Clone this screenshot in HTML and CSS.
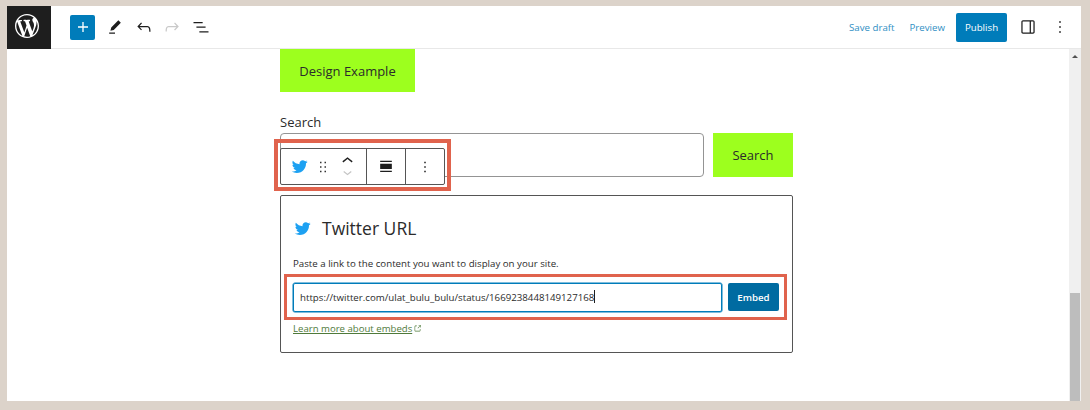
FILE: index.html
```html
<!DOCTYPE html>
<html lang="en">
<head>
    <meta charset="UTF-8">
    <title>Edit Post</title>
    <link rel="stylesheet" href="styles.css">
</head>
<body>
    <div class="editor">
        <header class="topbar">
            <a class="wp-logo">
                <svg viewBox="0 0 20 20" width="24" height="24"><path fill="#fff" d="M20 10c0-5.51-4.49-10-10-10C4.48 0 0 4.49 0 10c0 5.52 4.48 10 10 10 5.51 0 10-4.48 10-10zM7.78 15.37L4.37 6.22c.55-.02 1.17-.08 1.17-.08.5-.06.44-1.13-.06-1.11 0 0-1.45.11-2.37.11-.18 0-.37 0-.58-.01C4.12 2.69 6.87 1.11 10 1.11c2.33 0 4.45.87 6.05 2.34-.68-.11-1.65.39-1.65 1.58 0 .74.45 1.36.9 2.1.35.61.55 1.36.55 2.46 0 1.49-1.4 5-1.4 5l-3.03-8.37c.54-.02.82-.17.82-.17.5-.05.44-1.25-.06-1.22 0 0-1.44.12-2.38.12-.87 0-2.33-.12-2.33-.12-.5-.03-.56 1.2-.06 1.22l.92.08 1.26 3.41zM17.41 10c.24-.64.74-1.87.43-4.25.7 1.29 1.05 2.71 1.05 4.25 0 3.29-1.73 6.24-4.4 7.78.97-2.59 1.94-5.2 2.92-7.78zM6.1 18.09C3.12 16.65 1.11 13.53 1.11 10c0-1.3.23-2.48.72-3.59C3.25 10.3 4.67 14.2 6.1 18.09zm4.03-6.63l2.58 6.98c-.86.29-1.76.45-2.71.45-.79 0-1.57-.11-2.29-.33.81-2.38 1.62-4.74 2.42-7.1z"/></svg>
            </a>
            <div class="tools">
                <button class="add-btn">
                    <svg viewBox="0 0 24 24" width="20" height="20"><path fill="#fff" d="M18 11.2h-5.2V6h-1.6v5.2H6v1.6h5.2V18h1.6v-5.2H18z"/></svg>
                </button>
                <svg class="tool" viewBox="0 0 24 24" width="20" height="20"><path d="m19 7-3-3-8.5 8.5-1 4 4-1L19 7Zm-7 11.5H5V20h7v-1.5Z"/></svg>
                <svg class="tool" viewBox="0 0 24 24" width="20" height="20"><path d="M18.3 11.7c-.6-.6-1.4-.9-2.3-.9H6.7l2.9-3.3-1.1-1-4.5 5L8.5 16l1-1-2.7-2.7H16c.5 0 .9.2 1.3.5 1 1 1 3.4 1 4.5v.3h1.5v-.2c0-1.5 0-4.3-1.5-5.7z"/></svg>
                <svg class="tool off" viewBox="0 0 24 24" width="20" height="20"><path d="M15.6 6.5l-1.1 1 2.9 3.3H8c-.9 0-1.7.3-2.3.9-1.4 1.5-1.4 4.2-1.4 5.6v.2h1.5v-.3c0-1.1 0-3.5 1-4.5.3-.3.7-.5 1.3-.5h9.2L14.5 15l1.1 1.1 4.6-4.6-4.6-5z"/></svg>
                <svg class="tool" viewBox="0 0 24 24" width="20" height="20"><path d="M3 6h11v1.5H3V6Zm3.5 5.5h11V13h-11v-1.5ZM21 17H10v1.5h11V17Z"/></svg>
            </div>
            <div class="actions">
                <a class="link">Save draft</a>
                <a class="link">Preview</a>
                <button class="publish">Publish</button>
                <svg class="side" viewBox="0 0 24 24" width="20" height="20"><path d="M18 4H6c-1.1 0-2 .9-2 2v12c0 1.1.9 2 2 2h12c1.1 0 2-.9 2-2V6c0-1.1-.9-2-2-2zm-4 14.5H6c-.3 0-.5-.2-.5-.5V6c0-.3.2-.5.5-.5h8v13zm4.5-.5c0 .3-.2.5-.5.5h-2.5v-13H18c.3 0 .5.2.5.5v12z"/></svg>
                <svg class="more" viewBox="0 0 24 24" width="20" height="20"><path d="M13 19h-2v-2h2v2zm0-6h-2v-2h2v2zm0-6h-2V5h2v2z"/></svg>
            </div>
        </header>

        <div class="main">
            <div class="canvas">
                <div class="column">
                    <div class="design-btn">Design Example</div>

                    <div class="search-block">
                        <label class="search-label">Search</label>
                        <div class="search-row">
                            <div class="search-input"></div>
                            <div class="search-btn">Search</div>
                        </div>

                        <div class="block-toolbar">
                            <div class="tb-group tb-first">
                                <svg viewBox="0 0 24 24" width="19" height="19"><path fill="#1da1f2" d="M22.23 5.924c-.736.326-1.527.547-2.357.646.847-.508 1.498-1.312 1.804-2.27-.793.47-1.67.812-2.606.996C18.325 4.498 17.258 4 16.078 4c-2.266 0-4.103 1.837-4.103 4.103 0 .322.036.635.106.935-3.41-.17-6.433-1.804-8.457-4.287-.353.607-.556 1.312-.556 2.064 0 1.424.724 2.68 1.825 3.415-.673-.022-1.305-.207-1.86-.514v.052c0 1.988 1.415 3.647 3.293 4.023-.344.095-.707.145-1.08.145-.265 0-.522-.026-.773-.074.522 1.63 2.038 2.817 3.833 2.85-1.404 1.1-3.174 1.757-5.096 1.757-.332 0-.66-.02-.98-.057 1.816 1.164 3.973 1.843 6.29 1.843 7.547 0 11.675-6.252 11.675-11.675 0-.178-.004-.355-.012-.53.802-.578 1.497-1.3 2.047-2.132z"/></svg>
                                <svg class="grip" viewBox="0 0 24 24" width="18" height="18"><path fill="#333" d="M8 7h2V5H8v2zm0 6h2v-2H8v2zm0 6h2v-2H8v2zm6-14v2h2V5h-2zm0 8h2v-2h-2v2zm0 6h2v-2h-2v2z"/></svg>
                                <div class="movers">
                                    <svg viewBox="5 7 14 8" width="13" height="8"><path fill="#1e1e1e" d="M6.5 12.4L12 8l5.5 4.4-.9 1.2L12 10l-4.5 3.6-1-1.2z"/></svg>
                                    <svg viewBox="5 9 14 8" width="11" height="6"><path fill="#c4c4c4" d="M17.5 11.6L12 16l-5.5-4.4.9-1.2L12 14l4.5-3.6 1 1.2z"/></svg>
                                </div>
                            </div>
                            <div class="tb-group tb-align">
                                <svg viewBox="0 0 24 24" width="20" height="20"><path fill="#1e1e1e" d="M5 4.5h14V6H5zM5 8h14v6.5H5zM5 16.5h14V18H5z"/></svg>
                            </div>
                            <div class="tb-group tb-more">
                                <svg viewBox="0 0 24 24" width="18" height="18"><path fill="#1e1e1e" d="M13 19h-2v-2h2v2zm0-6h-2v-2h2v2zm0-6h-2V5h2v2z"/></svg>
                            </div>
                        </div>
                        <div class="mark mark-toolbar"></div>
                    </div>

                    <div class="embed">
                        <div class="embed-title">
                            <svg viewBox="0 0 24 24" width="19" height="19"><path fill="#1da1f2" d="M22.23 5.924c-.736.326-1.527.547-2.357.646.847-.508 1.498-1.312 1.804-2.27-.793.47-1.67.812-2.606.996C18.325 4.498 17.258 4 16.078 4c-2.266 0-4.103 1.837-4.103 4.103 0 .322.036.635.106.935-3.41-.17-6.433-1.804-8.457-4.287-.353.607-.556 1.312-.556 2.064 0 1.424.724 2.68 1.825 3.415-.673-.022-1.305-.207-1.86-.514v.052c0 1.988 1.415 3.647 3.293 4.023-.344.095-.707.145-1.08.145-.265 0-.522-.026-.773-.074.522 1.63 2.038 2.817 3.833 2.85-1.404 1.1-3.174 1.757-5.096 1.757-.332 0-.66-.02-.98-.057 1.816 1.164 3.973 1.843 6.29 1.843 7.547 0 11.675-6.252 11.675-11.675 0-.178-.004-.355-.012-.53.802-.578 1.497-1.3 2.047-2.132z"/></svg>
                            <span>Twitter URL</span>
                        </div>
                        <p class="embed-help">Paste a link to the content you want to display on your site.</p>
                        <div class="embed-form">
                            <div class="embed-input">https://twitter.com/ulat_bulu_bulu/status/1669238448149127168<i class="caret"></i></div>
                            <button class="embed-btn">Embed</button>
                        </div>
                        <a class="embed-learn"><span>Learn more about embeds</span><svg viewBox="0 0 24 24" width="9" height="9"><path fill="#4f7a3a" d="M18.2 17c0 .7-.6 1.2-1.2 1.2H7c-.7 0-1.2-.6-1.2-1.2V7c0-.7.6-1.2 1.2-1.2h3.2V4.2H7C5.5 4.2 4.2 5.5 4.2 7v10c0 1.5 1.2 2.8 2.8 2.8h10c1.5 0 2.8-1.2 2.8-2.8v-3.6h-1.5V17zM14.9 3v1.5h3.7l-6.4 6.4 1.1 1.1 6.4-6.4v3.7h1.5V3h-6.8z"/></svg></a>
                    </div>
                </div>
            </div>
            <div class="scrollbar">
                <i class="scroll-up"></i>
                <div class="scroll-thumb"></div>
            </div>
        </div>
    </div>
</body>
</html>
```

FILE: styles.css
```css
html, body {
    margin: 0;
    height: 100%;
}
body {
    background-color: #dcd3ca;
    font-family: "Open Sans", Arial, sans-serif;
    color: #2b2b2b;
    padding: 6px 9px 9px 7px;
    box-sizing: border-box;
    overflow: hidden;
}
button {
    font-family: inherit;
    border: none;
    padding: 0;
}
.editor {
    height: 100%;
    background-color: #fff;
    display: flex;
    flex-direction: column;
}

/* top bar */
.topbar {
    height: 42px;
    flex-shrink: 0;
    display: flex;
    align-items: center;
    border-bottom: 1px solid #e8e8e8;
}
.wp-logo {
    width: 44px;
    height: 43px;
    margin-bottom: -1px;
    background-color: #1e1e1e;
    display: flex;
    align-items: center;
    justify-content: center;
}
.wp-logo svg {
    margin: 0 4px 3px 0;
}
.tools {
    display: flex;
    align-items: center;
    margin-left: 19px;
}
.add-btn {
    width: 25px;
    height: 25px;
    border-radius: 2px;
    background-color: #007cba;
    display: flex;
    align-items: center;
    justify-content: center;
    margin-right: 10px;
}
.tool {
    margin-right: 8.6px;
    fill: #1e1e1e;
}
.tool.off {
    fill: #c9c9c9;
}
.actions {
    margin-left: auto;
    display: flex;
    align-items: center;
    font-size: 9.7px;
    padding-right: 11px;
}
.link {
    color: #2f8fc4;
    margin-right: 15px;
}
.publish {
    width: 51px;
    height: 29px;
    border-radius: 2px;
    background-color: #007cba;
    color: #fff;
    font-size: 9.7px;
    margin-left: -4px;
}
.side {
    margin-left: 11px;
    fill: #1e1e1e;
}
.more {
    margin-left: 12px;
    fill: #1e1e1e;
}

/* canvas */
.main {
    flex: 1;
    min-height: 0;
    display: flex;
}
.canvas {
    flex: 1;
    min-width: 0;
}
.column {
    width: 513px;
    margin-left: 273px;
}
.design-btn {
    width: 135px;
    height: 43px;
    background-color: #9dff1e;
    font-size: 13px;
    display: flex;
    align-items: center;
    justify-content: center;
}
.search-block {
    position: relative;
    margin-top: 20px;
}
.search-label {
    display: block;
    font-size: 13px;
    line-height: 20px;
    margin-bottom: 1px;
}
.search-row {
    display: flex;
    gap: 9px;
}
.search-input {
    flex: 1;
    height: 42px;
    border: 1px solid #949494;
    border-radius: 4px;
}
.search-btn {
    width: 80px;
    height: 44px;
    background-color: #9dff1e;
    font-size: 13px;
    display: flex;
    align-items: center;
    justify-content: center;
}

/* block toolbar over the search field */
.block-toolbar {
    position: absolute;
    left: 0;
    top: 36px;
    height: 35px;
    display: flex;
    background-color: #fff;
    border: 1px solid #555;
    border-radius: 2px;
}
.tb-group {
    display: flex;
    align-items: center;
    justify-content: center;
    border-left: 1px solid #555;
}
.tb-first {
    width: 85px;
    border-left: none;
    padding-left: 9px;
    justify-content: flex-start;
    box-sizing: border-box;
}
.grip {
    margin-left: 5px;
}
.tb-align {
    width: 38px;
}
.tb-more {
    width: 38px;
}
.movers {
    display: flex;
    flex-direction: column;
    align-items: center;
    gap: 6px;
    margin-left: 9px;
    margin-top: -1px;
}
.movers svg {
    display: block;
}
.mark {
    border: 4px solid #e0634d;
}
.mark-toolbar {
    position: absolute;
    left: -6px;
    top: 27px;
    width: 169px;
    height: 44px;
}

/* embed placeholder */
.embed {
    margin-top: 18px;
    height: 156px;
    border: 1px solid #555;
    border-radius: 2px;
    padding: 0 12px;
}
.embed-title {
    display: flex;
    align-items: center;
    gap: 10px;
    margin-top: 19px;
    height: 26px;
    font-size: 17.5px;
}
.embed-help {
    margin: 15px 0 0;
    font-size: 9.7px;
    line-height: 16px;
}
.embed-form {
    display: flex;
    align-items: center;
    gap: 6px;
    margin: 2px -7px 0 -9px;
    height: 40px;
    padding: 0 5px 0 6px;
    border: 3px solid #e0634d;
}
.embed-input {
    flex: 1;
    height: 27px;
    border: 1px solid #007cba;
    box-shadow: 0 0 0 0.5px #007cba;
    border-radius: 2px;
    font-size: 9.7px;
    line-height: 27px;
    padding-left: 6px;
}
.caret {
    display: inline-block;
    width: 1px;
    height: 13px;
    background-color: #1e1e1e;
    vertical-align: -2px;
}
.embed-btn {
    width: 51px;
    height: 28px;
    background-color: #006ba1;
    color: #fff;
    font-size: 9.7px;
    font-weight: 600;
    border-radius: 2px;
}
.embed-learn {
    display: flex;
    align-items: center;
    gap: 1px;
    margin-top: 2px;
    font-size: 9.6px;
    color: #4f7a3a;
}
.embed-learn span {
    text-decoration: underline;
}

/* scrollbar */
.scrollbar {
    width: 12px;
    background-color: #f0f0f0;
    position: relative;
}
.scroll-up {
    position: absolute;
    left: 3px;
    top: 6px;
    border-left: 3px solid transparent;
    border-right: 3px solid transparent;
    border-bottom: 3px solid #505050;
}
.scroll-thumb {
    position: absolute;
    left: 1px;
    right: 1px;
    bottom: 0;
    height: 108px;
    background-color: #bdbdbd;
}
```
